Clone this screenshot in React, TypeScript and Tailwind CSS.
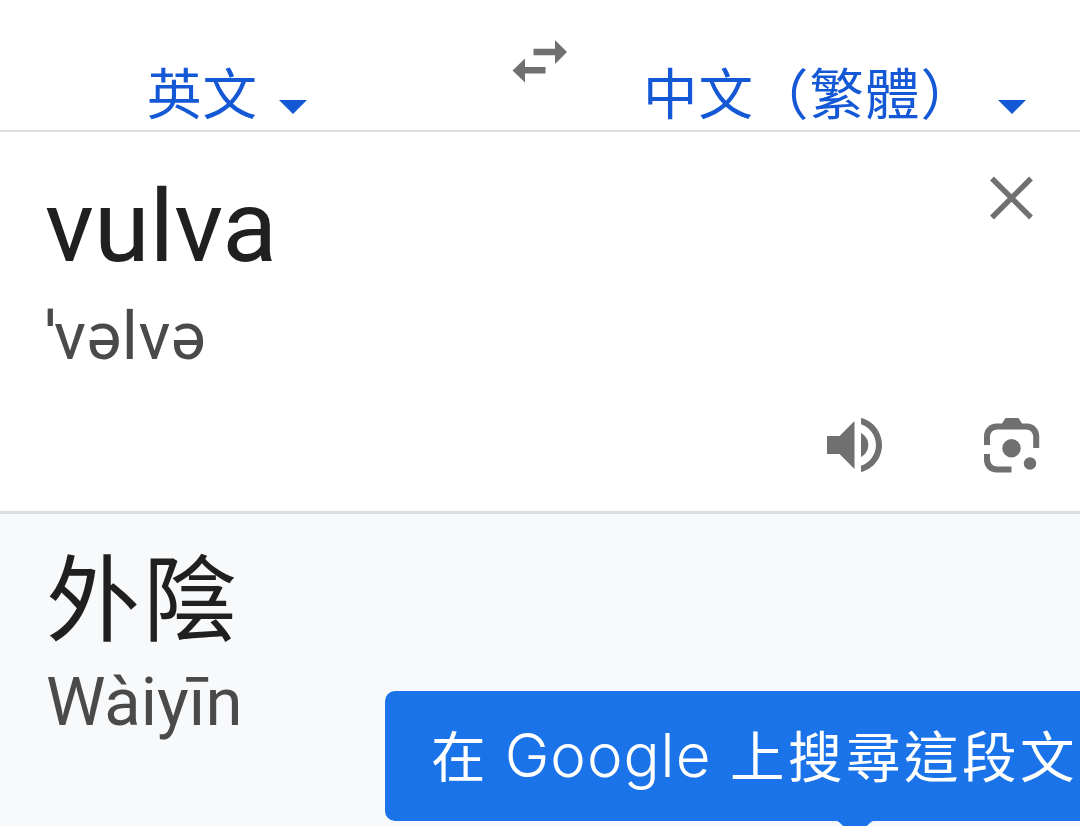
const cjk = "font-['Noto_Sans_CJK_TC',sans-serif]";
const roboto = "font-['Roboto','Noto_Sans',sans-serif]";

function Caret({ className }: { className?: string }) {
  return (
    <svg viewBox="0 0 28 14" className={`h-3.5 w-7 shrink-0 ${className ?? ""}`} fill="#1558d6" aria-hidden>
      <path d="M0 0h28L14 14z" />
    </svg>
  );
}

function SwapIcon() {
  return (
    <svg viewBox="0 0 56 44" className="h-11 w-14" fill="#707070" aria-hidden>
      <path d="M21.500 9.700h21.500V1l12 12-12 12v-8.800H21.500z" />
      <path d="M33.500 28H13V19.500L.5 31.500 13 43.500V34.500h20.500z" />
    </svg>
  );
}

function CloseIcon() {
  return (
    <svg viewBox="0 0 44 44" className="h-11 w-11" stroke="#707070" strokeWidth="5.4" aria-hidden>
      <path d="M3 2.500l39 39M42 2.500l-39 39" />
    </svg>
  );
}

function SpeakerIcon() {
  return (
    <svg viewBox="0 0 56 56" className="h-14 w-14" fill="#707070" aria-hidden>
      <path d="M0 19h12.500L27.500 4v48L12.500 37H0z" />
      <path d="M34 16c4.500 2.300 7.300 7 7.300 12S38.500 37.700 34 40z" />
      <path d="M34 1c12.200 2.800 21 14 21 27s-8.800 24.200-21 27v-6.200c8.600-2.800 15-11.200 15-20.800S42.600 10 34 7.200z" />
    </svg>
  );
}

function LensIcon() {
  return (
    <svg viewBox="0 0 56 56" className="h-14 w-14" fill="#707070" aria-hidden>
      <path d="M0 28V19C0 12 5.500 6.500 12.500 6.500H18L21.500 1h13L38 6.500h5C50 6.500 55.200 12 55.200 19v12h-6V20c0-4.500-3-7.500-7.500-7.500h-28C9 12.500 6 15.500 6 20v8z" />
      <path d="M0 37h6v5c0 4.500 3 7.500 7.500 7.500h14v6h-15C5.500 55.500 0 50 0 43z" />
      <circle cx="27.500" cy="31.300" r="9.200" />
      <circle cx="46" cy="46.500" r="6.200" />
    </svg>
  );
}

function LanguageBar() {
  return (
    <header className={`flex h-[132px] items-start border-b-2 border-[#dcdcdc] text-[54.5px] leading-[56px] tracking-[1px] text-[#1558d6] ${cjk}`}>
      <button className="ml-[147px] mt-[63px] flex w-[365px] whitespace-nowrap">
        <span className="w-[132px] text-left">英文</span>
        <Caret className="mt-[37px]" />
      </button>
      <button className="mt-[39px] w-[131px]" aria-label="切換語言">
        <SwapIcon />
      </button>
      <button className="mt-[63px] flex whitespace-nowrap">
        <span className="w-[355px] text-left">中文（繁體）</span>
        <Caret className="mt-[37px]" />
      </button>
    </header>
  );
}

export default function App() {
  return (
    <div className="relative flex h-[826px] w-[1080px] flex-col overflow-hidden bg-white">
      <LanguageBar />

      <section className={`flex h-[382px] flex-col border-b-[3px] border-[#dadce0] pl-[45px] pr-10 ${roboto}`}>
        <div className="flex h-[285px] justify-between">
          <div className="pt-[45px]">
            <h1 className="text-[101px] leading-[100px] text-[#202020]">vulva</h1>
            <p className="mt-[27px] text-[66px] leading-[66px] tracking-[0.5px] text-[#4a4a4a]">
              <span className="mr-[-2px]">ˈ</span>vəlvə
            </p>
          </div>
          <button className="mr-[7px] mt-[44px] h-11 w-11" aria-label="清除">
            <CloseIcon />
          </button>
        </div>
        <div className="flex justify-end gap-[101px]">
          <button aria-label="聆聽">
            <SpeakerIcon />
          </button>
          <button aria-label="相機">
            <LensIcon />
          </button>
        </div>
      </section>

      <section className="flex-1 bg-[#f8f9fb] pl-[46px] pt-[30px]">
        <h2 className={`text-[94px] leading-[98px] tracking-[3px] text-[#202020] ${cjk}`}>外陰</h2>
        <p className={`mt-6 text-[67px] leading-[72px] text-[#4a4a4a] ${roboto}`}>Wàiyīn</p>
      </section>

      <div className="absolute left-[385px] top-[691px] flex h-[130px] w-[720px] items-start rounded-[10px] bg-[#1a73e8] pl-[46px] pt-[33px]">
        <span className={`whitespace-pre text-[54.5px] leading-[60px] tracking-[3.5px] text-white ${cjk}`}>
          在 <span className="mr-[3px] font-['Inter',sans-serif] text-[60px] font-[350] tracking-[1px]">Google</span> 上搜尋這段文
        </span>
        <svg viewBox="0 0 38 8" className="absolute left-[451px] top-[129px] h-2 w-[38px]" fill="#1a73e8" aria-hidden>
          <path d="M0 0h38v1c-3 0-5 3-9 7H9C5 4 3 1 0 1z" />
        </svg>
      </div>
    </div>
  );
}
